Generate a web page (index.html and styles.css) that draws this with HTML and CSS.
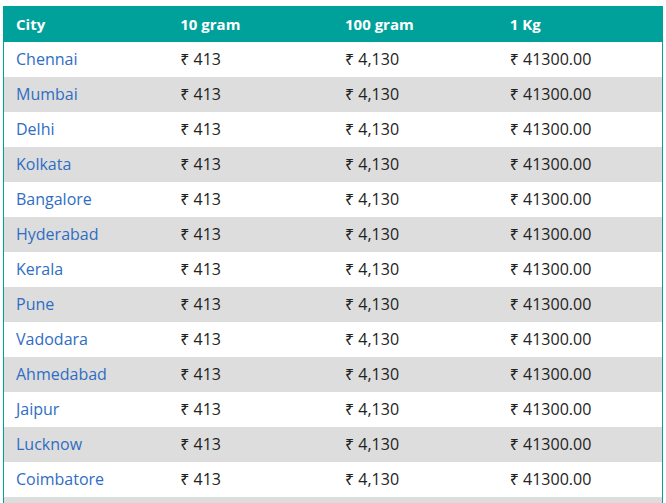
FILE: index.html
```html
<!DOCTYPE html>
<html>
<head>
<meta charset="utf-8">
<link rel="stylesheet" href="styles.css">
</head>
<body>
<table class="rates">
<thead>
<tr><th>City</th><th>10 gram</th><th>100 gram</th><th>1 Kg</th></tr>
</thead>
<tbody>
<tr><td><a class="city" href="#">Chennai</a></td><td>₹ 413</td><td>₹ 4,130</td><td>₹ 41300.00</td></tr>
<tr><td><a class="city" href="#">Mumbai</a></td><td>₹ 413</td><td>₹ 4,130</td><td>₹ 41300.00</td></tr>
<tr><td><a class="city" href="#">Delhi</a></td><td>₹ 413</td><td>₹ 4,130</td><td>₹ 41300.00</td></tr>
<tr><td><a class="city" href="#">Kolkata</a></td><td>₹ 413</td><td>₹ 4,130</td><td>₹ 41300.00</td></tr>
<tr><td><a class="city" href="#">Bangalore</a></td><td>₹ 413</td><td>₹ 4,130</td><td>₹ 41300.00</td></tr>
<tr><td><a class="city" href="#">Hyderabad</a></td><td>₹ 413</td><td>₹ 4,130</td><td>₹ 41300.00</td></tr>
<tr><td><a class="city" href="#">Kerala</a></td><td>₹ 413</td><td>₹ 4,130</td><td>₹ 41300.00</td></tr>
<tr><td><a class="city" href="#">Pune</a></td><td>₹ 413</td><td>₹ 4,130</td><td>₹ 41300.00</td></tr>
<tr><td><a class="city" href="#">Vadodara</a></td><td>₹ 413</td><td>₹ 4,130</td><td>₹ 41300.00</td></tr>
<tr><td><a class="city" href="#">Ahmedabad</a></td><td>₹ 413</td><td>₹ 4,130</td><td>₹ 41300.00</td></tr>
<tr><td><a class="city" href="#">Jaipur</a></td><td>₹ 413</td><td>₹ 4,130</td><td>₹ 41300.00</td></tr>
<tr><td><a class="city" href="#">Lucknow</a></td><td>₹ 413</td><td>₹ 4,130</td><td>₹ 41300.00</td></tr>
<tr><td><a class="city" href="#">Coimbatore</a></td><td>₹ 413</td><td>₹ 4,130</td><td>₹ 41300.00</td></tr>
<tr><td></td><td></td><td></td><td></td></tr>
</tbody>
</table>
</body>
</html>
```
FILE: styles.css
```css
html, body {
  margin: 0;
  padding: 0;
  background: #ffffff;
}
body {
  padding: 6px 0 0 3px;
  font-family: "Open Sans", "Noto Sans", sans-serif;
}
.rates {
  width: 660px;
  border-collapse: collapse;
  table-layout: fixed;
  border-left: 1px solid #00a19a;
  border-right: 1px solid #00a19a;
}
.rates th {
  background: #00a19a;
  color: #ffffff;
  font-size: 15px;
  font-weight: 700;
  text-align: left;
  height: 36px;
  padding: 0 12px 1px;
  box-sizing: border-box;
}
.rates td {
  font-size: 16px;
  color: #222222;
  height: 35px;
  padding: 0 12px 2px;
  box-sizing: border-box;
}
.rates tbody tr:nth-child(even) td {
  background: #dddddd;
}
.city {
  color: #2f6dc4;
  text-decoration: none;
}
```
